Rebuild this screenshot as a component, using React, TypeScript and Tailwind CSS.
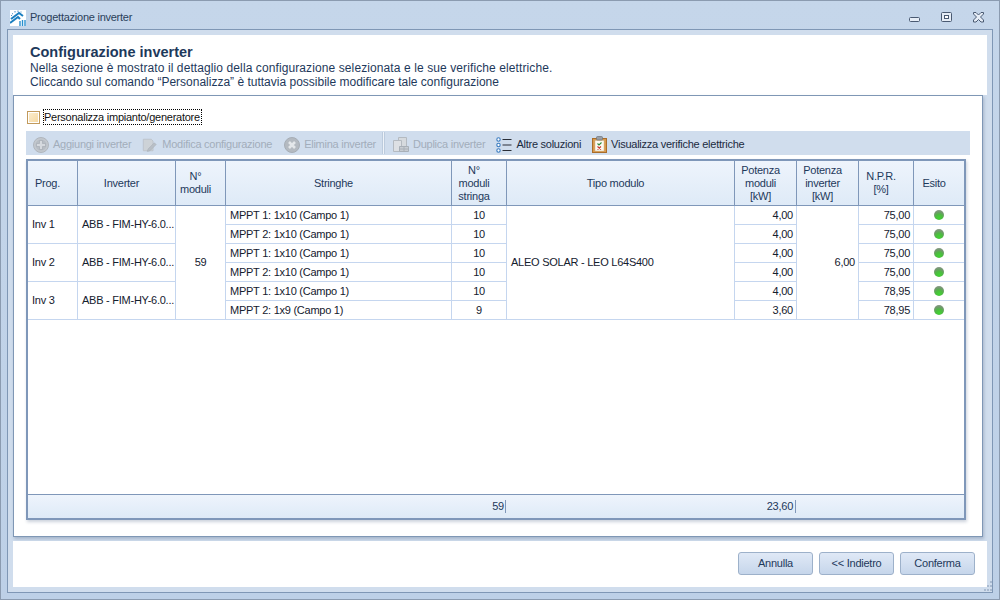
const font = "font-['Liberation_Sans',Arial,sans-serif]";

const rows = [
  { stringa: "MPPT 1: 1x10 (Campo 1)", n: "10", pot: "4,00", npr: "75,00" },
  { stringa: "MPPT 2: 1x10 (Campo 1)", n: "10", pot: "4,00", npr: "75,00" },
  { stringa: "MPPT 1: 1x10 (Campo 1)", n: "10", pot: "4,00", npr: "75,00" },
  { stringa: "MPPT 2: 1x10 (Campo 1)", n: "10", pot: "4,00", npr: "75,00" },
  { stringa: "MPPT 1: 1x10 (Campo 1)", n: "10", pot: "4,00", npr: "78,95" },
  { stringa: "MPPT 2: 1x9 (Campo 1)", n: "9", pot: "3,60", npr: "78,95" },
];

const headers = [
  { label: ["Prog."], w: "w-[50px]" },
  { label: ["Inverter"], w: "w-[98px]" },
  { label: ["N°", "moduli"], w: "w-[50px]" },
  { label: ["Stringhe"], w: "w-[226px]" },
  { label: ["N°", "moduli", "stringa"], w: "w-[55px]" },
  { label: ["Tipo modulo"], w: "w-[228px]" },
  { label: ["Potenza", "moduli", "[kW]"], w: "w-[62px]" },
  { label: ["Potenza", "inverter", "[kW]"], w: "w-[62px]" },
  { label: ["N.P.R.", "[%]"], w: "w-[55px]" },
  { label: ["Esito"], w: "w-[50px]" },
];

const Logo = () => (
  <svg width="16" height="16" viewBox="0 0 16 16" className="shrink-0">
    <rect width="16" height="16" fill="#fff" />
    <path d="M1 9 L9 3 L13 6" fill="none" stroke="#1b7fc0" strokeWidth="2" />
    <path d="M0 13 L8 7 L10 9" fill="none" stroke="#1b7fc0" strokeWidth="2" />
    <path d="M10 11v5M12.5 10v6M15 10v6" stroke="#2a8fcf" strokeWidth="1.4" />
    <path d="M1 6l1-1M2 3.5l1 .5M5 1v1.5M8 0.5v1.5M11 1.5v1" stroke="#4a90c8" strokeWidth="1" />
  </svg>
);

const PlusIcon = () => (
  <svg width="16" height="16" viewBox="0 0 16 16" className="shrink-0">
    <circle cx="8" cy="8" r="7.5" fill="#c3c8ce" stroke="#b0b6bd" />
    <circle cx="8" cy="8" r="5.5" fill="#b7bdc4" />
    <path d="M6.5 3.5h3v3h3v3h-3v3h-3v-3h-3v-3h3z" fill="#d5d9de" stroke="#a6adb5" strokeWidth="0.7" />
  </svg>
);

const EditIcon = () => (
  <svg width="15" height="16" viewBox="0 0 17 16" className="shrink-0">
    <path d="M1.5 1.5h9l2 2v11h-11z" fill="#cdd2d7" stroke="#bcc2c9" />
    <path d="M7 12.5l7-7 2 2-7 7-3 .8z" fill="#b9bfc6" stroke="#a9b0b8" strokeWidth="0.7" />
  </svg>
);

const DeleteIcon = () => (
  <svg width="16" height="16" viewBox="0 0 16 16" className="shrink-0">
    <circle cx="8" cy="8" r="7.5" fill="#b4bac1" stroke="#a6adb5" />
    <path d="M5 5l6 6M11 5l-6 6" stroke="#e4e7ea" strokeWidth="2.6" />
  </svg>
);

const DuplicateIcon = () => (
  <svg width="16" height="16" viewBox="0 0 16 16" className="shrink-0">
    <path d="M5.5 .5h8v9h-8z" fill="#d6dade" stroke="#b4bac1" />
    <path d="M.5 3.5h8v11h-8z" fill="#dde0e4" stroke="#b4bac1" />
    <path d="M6.5 9.5h9v5h-9zM6.5 12h9M11 9.5v5" fill="#c8cdd3" stroke="#a9b0b8" />
  </svg>
);

const ListIcon = () => (
  <svg width="16" height="16" viewBox="0 0 16 16" className="shrink-0">
    <g fill="#fff" stroke="#3b7cc0" strokeWidth="1.1">
      <circle cx="2.5" cy="2.5" r="1.7" />
      <circle cx="2.5" cy="8" r="1.7" />
      <circle cx="2.5" cy="13.5" r="1.7" />
    </g>
    <path d="M6.5 2.5h9M6.5 8h9M6.5 13.5h9" stroke="#2a2f38" strokeWidth="1.2" />
  </svg>
);

const ClipboardIcon = () => (
  <svg width="15" height="17" viewBox="0 0 15 17" className="shrink-0">
    <rect x=".5" y="2.5" width="14" height="14" fill="#d99a4e" stroke="#a96d2a" />
    <rect x="3" y="4.5" width="9" height="10.5" fill="#fdfaf2" stroke="#c9b893" strokeWidth="0.5" />
    <rect x="4.5" y=".5" width="6" height="3.5" rx="1" fill="#9a9fa6" stroke="#6d7279" strokeWidth="0.7" />
    <path d="M5.5 7.5l1.5 1.5 2.5-2.5" fill="none" stroke="#2e8b3a" strokeWidth="1.1" />
    <path d="M5.5 10.5l3.5 3M9 10.5l-3.5 3" stroke="#c8352c" strokeWidth="1.1" />
  </svg>
);

const ToolItem = ({ icon, label, off, className }: { icon: React.ReactNode; label: string; off?: boolean; className?: string }) => (
  <div className={`flex items-center gap-[4px] ${off ? "text-[#a2adbb]" : "text-[#1b2b3f]"} ${className ?? ""}`}>
    {icon}
    <span className="whitespace-nowrap">{label}</span>
  </div>
);

const Dot = () => (
  <div className="mx-auto size-[10px] rounded-full bg-[radial-gradient(circle_at_50%_78%,#3fd62f_0%,#4fb843_38%,#6f9a6a_62%,#8a9a88_85%,#a3aea2_100%)]" />
);

const cell = "border-r border-b border-[#c5d6ef] h-[19px] p-0 text-[#14202e]";

function App() {
  return (
    <div className={`w-[1000px] h-[600px] flex flex-col border border-[#8b9bb0] bg-gradient-to-b from-[#c5d6ea] to-[#bdd0e7] text-[11px] tracking-[-0.25px] ${font}`}>
      <div className="h-[28px] shrink-0 flex items-center pl-[9px] pr-[15px] pt-[5px]">
        <Logo />
        <span className="ml-[4px] text-[#2a3f5a]">Progettazione inverter</span>
        <div className="ml-auto flex items-center gap-[21px]">
          <svg width="11" height="11" viewBox="0 0 11 11"><rect x=".5" y="5.5" width="10" height="4" rx="1" fill="#e6edf6" stroke="#4a5a72" /></svg>
          <svg width="11" height="11" viewBox="0 0 11 11"><rect x=".5" y=".5" width="10" height="9" rx="1" fill="#e6edf6" stroke="#4a5a72" /><rect x="3.5" y="3.5" width="4" height="3" fill="#fff" stroke="#4a5a72" /></svg>
          <svg width="11" height="11" viewBox="0 0 11 11"><path d="M.5 .5h2.5l2.5 2.5 2.5-2.5h2.5v1.5l-3 3 3 3v2h-2.5l-2.5-2.5-2.5 2.5h-2.5v-2l3-3-3-3z" fill="#e6edf6" stroke="#4a5a72" /></svg>
        </div>
      </div>

      <div className="relative flex-1 min-h-0 mx-[6px] mb-[6px] border border-[#7f97b5] bg-[#d0dded] p-[5px] flex flex-col">
        <div className="h-[60px] shrink-0 bg-white pl-[17px] pt-[8px]">
          <div className="text-[14.5px] tracking-normal leading-[18px] font-bold text-[#1e395b]">Configurazione inverter</div>
          <div className="text-[12px] leading-[14px] text-[#1e395b] tracking-[0.1px]">Nella sezione è mostrato il dettaglio della configurazione selezionata e le sue verifiche elettriche.</div>
          <div className="text-[12px] leading-[14px] text-[#1e395b] tracking-normal">Cliccando sul comando “Personalizza” è tuttavia possibile modificare tale configurazione</div>
        </div>

        <div className="h-[442px] shrink-0 mr-[4px] border border-[#7f97b5] bg-white shadow-[1px_2px_3px_rgba(90,110,140,0.35)] flex flex-col pl-[12px] pr-[12px] pt-[13px]">
          <div className="h-[16px] flex items-center gap-[3px] pl-[1px]">
            <div className="size-[13px] border border-[#c29a5c] bg-white p-[1px]">
              <div className="size-full bg-gradient-to-br from-[#fbeccb] to-[#f6d9a3]" />
            </div>
            <div className="h-[16px] w-[159px] border border-dotted border-black flex items-center pt-[1px] text-[#111] whitespace-nowrap">Personalizza impianto/generatore</div>
          </div>

          <div className="mt-[6px] h-[24px] shrink-0 bg-[#d0dded] flex items-center pl-[7px] pt-[3px]">
            <ToolItem off icon={<PlusIcon />} label="Aggiungi inverter" />
            <ToolItem off icon={<EditIcon />} label="Modifica configurazione" className="ml-[11px] gap-[5px]" />
            <ToolItem off icon={<DeleteIcon />} label="Elimina inverter" className="ml-[12px]" />
            <div className="ml-[6px] -mt-[3px] h-[22px] w-[3px] border-x border-[#bccbdd] bg-[#eef3f9]" />
            <ToolItem off icon={<DuplicateIcon />} label="Duplica inverter" className="ml-[8px]" />
            <ToolItem icon={<ListIcon />} label="Altre soluzioni" className="ml-[11px]" />
            <ToolItem icon={<ClipboardIcon />} label="Visualizza verifiche elettriche" className="ml-[11px]" />
          </div>

          <div className="mt-[4px] h-[361px] w-[940px] shrink-0 border-2 border-[#7f97b9] bg-white shadow-[1px_2px_3px_rgba(90,110,140,0.3)] flex flex-col">
            <table className="table-fixed border-separate border-spacing-0 w-[936px]">
              <thead>
                <tr className="bg-gradient-to-b from-[#eef4fc] to-[#deeaf7]">
                  {headers.map((h, i) => (
                    <th key={i} className={`${h.w} h-[45px] p-0 pr-[10px] font-normal leading-[13px] text-[#1e395b] border-b border-[#7f97b9] ${i < 9 ? "border-r" : ""}`}>
                      {h.label.map((l) => (
                        <div key={l}>{l}</div>
                      ))}
                    </th>
                  ))}
                </tr>
              </thead>
              <tbody>
                {rows.map((r, i) => (
                  <tr key={i}>
                    {i % 2 === 0 && <td rowSpan={2} className={`${cell} pl-[4px]`}>Inv {i / 2 + 1}</td>}
                    {i % 2 === 0 && <td rowSpan={2} className={`${cell} pl-[4px] whitespace-nowrap`}>ABB - FIM-HY-6.0...</td>}
                    {i === 0 && <td rowSpan={6} className={`${cell} text-center`}>59</td>}
                    <td className={`${cell} pl-[4px]`}>{r.stringa}</td>
                    <td className={`${cell} text-center`}>{r.n}</td>
                    {i === 0 && <td rowSpan={6} className={`${cell} pl-[4px]`}>ALEO SOLAR - LEO L64S400</td>}
                    <td className={`${cell} text-right pr-[3px]`}>{r.pot}</td>
                    {i === 0 && <td rowSpan={6} className={`${cell} text-right pr-[3px]`}>6,00</td>}
                    <td className={`${cell} text-right pr-[3px]`}>{r.npr}</td>
                    <td className="border-b border-[#c5d6ef] h-[19px] p-0"><Dot /></td>
                  </tr>
                ))}
              </tbody>
            </table>
            <div className="flex-1" />
            <div className="h-[24px] shrink-0 border-t border-[#7f97b9] bg-gradient-to-b from-[#eef4fc] to-[#deeaf7] flex items-center text-[#1e395b]">
              <div className="w-[478px] h-[13px] leading-[13px] text-right pr-[1px] border-r border-[#7f97b9]">59</div>
              <div className="w-[290px] h-[13px] leading-[13px] text-right pr-[2px] border-r border-[#7f97b9]">23,60</div>
            </div>
          </div>
        </div>

        <div className="mt-[4px] flex-1 bg-white flex justify-end items-start gap-[6px] pt-[11px] pr-[12px] text-[#1e395b]">
          {["Annulla", "<< Indietro", "Conferma"].map((b) => (
            <button key={b} className="w-[75px] h-[23px] rounded-[3px] border border-[#9db1ca] bg-gradient-to-b from-[#e0e9f6] to-[#c6d6eb] text-[#1e395b]">{b}</button>
          ))}
        </div>

        <svg width="8" height="11" viewBox="0 0 8 11" className="absolute right-[0px] bottom-[0px]">
          <path d="M6 0h2v2h-2zM6 4h2v2h-2zM3 4h2v2h-2zM6 8h2v2h-2zM3 8h2v2h-2zM0 8h2v2h-2z" fill="#a9bad0" />
        </svg>
      </div>
    </div>
  );
}

export default App;
